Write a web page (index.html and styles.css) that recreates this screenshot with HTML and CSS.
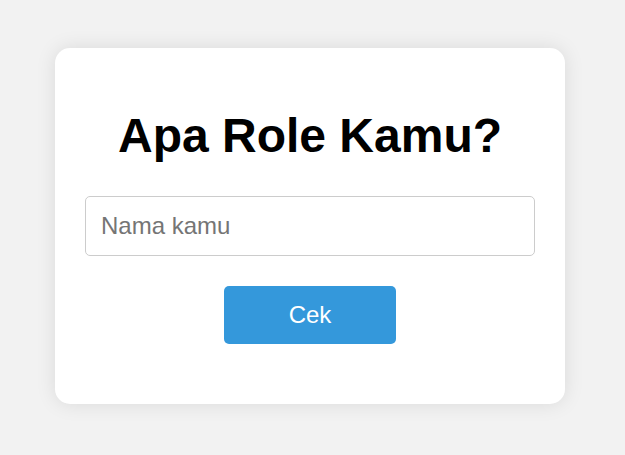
FILE: index.html
```html
<!DOCTYPE html>
<html lang="id">
<head>
<meta charset="utf-8">
<title>Apa Role Kamu?</title>
<link rel="stylesheet" href="styles.css">
</head>
<body>
  <main class="card">
    <h1 class="title">Apa Role Kamu?</h1>
    <input class="name-input" type="text" placeholder="Nama kamu">
    <button class="check-btn" type="button">Cek</button>
  </main>
</body>
</html>
```
FILE: styles.css
```css
html, body {
  margin: 0;
  height: 100%;
}
body {
  box-sizing: border-box;
  padding: 0 5px 4px 0;
  background: #f2f2f2;
  font-family: "Liberation Sans", Arial, sans-serif;
  display: flex;
  align-items: center;
  justify-content: center;
}
.card {
  box-sizing: border-box;
  width: 510px;
  background: #fff;
  border-radius: 15px;
  box-shadow: 0 0 20px rgba(0, 0, 0, 0.1);
  padding: 30px 30px 60px;
  display: flex;
  flex-direction: column;
  align-items: center;
}
.title {
  margin: 30px 0 33px;
  font-size: 48px;
  font-weight: bold;
  color: #000;
  line-height: normal;
}
.name-input {
  box-sizing: border-box;
  width: 100%;
  padding: 15px;
  font-family: inherit;
  font-size: 24px;
  border: 1px solid #ccc;
  border-radius: 5px;
  color: #333;
  outline: none;
  margin-bottom: 30px;
}
.name-input::placeholder {
  color: #757575;
}
.check-btn {
  padding: 15px 0;
  width: 172px;
  font-family: inherit;
  font-size: 24px;
  background: #3498db;
  color: #fff;
  border: none;
  border-radius: 5px;
  cursor: pointer;
}
```
